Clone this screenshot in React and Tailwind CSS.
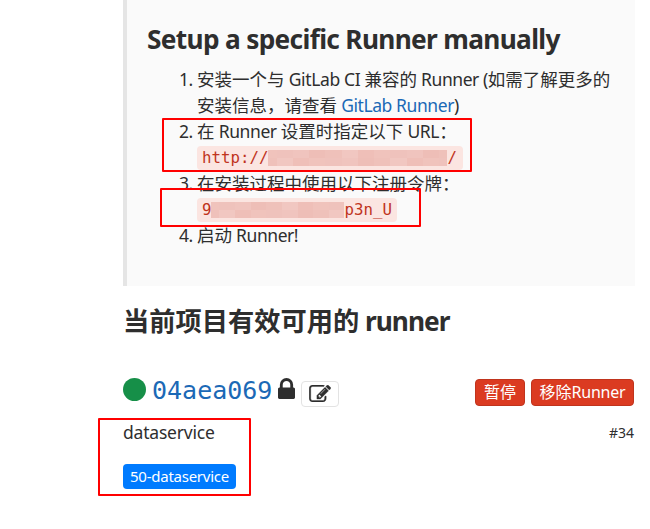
import React from "react";

const MOSAIC = ["#f0c3bc", "#efbfb8", "#f1c7c1", "#efc1ba", "#eebeb7", "#f0c4be", "#efc2bc"];

function Redacted({ columns, className }) {
  return (
    <span className={`inline-grid shrink-0 grid-flow-col grid-rows-2 auto-cols-fr align-top ${className}`} aria-hidden="true">
      {Array.from({ length: columns * 2 }, (_, i) => (
        <span key={i} style={{ backgroundColor: MOSAIC[(i * 3 + (i >> 2)) % MOSAIC.length] }} />
      ))}
    </span>
  );
}

function Code({ children, className }) {
  return (
    <code className={`flex h-6 items-center overflow-hidden rounded-[4px] bg-[#fbe5e1] pl-[5px] font-['DejaVu_Sans_Mono',monospace] text-[15.75px] leading-6 text-[#c0341d] ${className}`}>
      {children}
    </code>
  );
}

function Item({ number, children }) {
  return (
    <li className="flex">
      <span className="w-[18px] shrink-0 tracking-[-0.6px]">{number}.</span>
      <div className="whitespace-nowrap">{children}</div>
    </li>
  );
}

export default function App() {
  return (
    <div className="relative h-[529px] w-[650px] overflow-hidden bg-white font-['Noto_Sans','Noto_Sans_CJK_SC',sans-serif] text-[17.5px] leading-[26px] text-[#2e2e2e]">
      <section className="ml-[123px] h-[286px] w-[512px] border-l-4 border-[#e5e5e5] bg-[#fafafa] pl-5 pt-[23px]">
        <h4 className="h-[43px] whitespace-nowrap text-[26.25px] font-bold leading-8 tracking-[-0.67px]">
          Setup a specific Runner manually
        </h4>
        <ol className="pl-8">
          <Item number={1}>
            安装一个与<span className="tracking-[-0.36px]"> GitLab CI </span>兼容的<span className="tracking-[-0.45px]"> Runner (</span>如需了解更多的
            <br />
            安装信息，请查看<span className="tracking-[-0.42px]"> <a className="text-[#1b69b6]">GitLab Runner</a>)</span>
          </Item>
          <Item number={2}>
            在<span className="tracking-[-0.4px]"> Runner </span>设置时指定以下<span className="tracking-[-0.4px]"> URL</span>：
            <div className="flex h-[26px] items-end">
              <Code className="w-[266px]">
                http://
                <Redacted columns={22} className="h-4 w-[179px]" />/
              </Code>
            </div>
          </Item>
          <Item number={3}>
            在安装过程中使用以下注册令牌：
            <div className="flex h-[26px] items-end">
              <Code className="w-[200px]">
                9<Redacted columns={17} className="h-4 w-[133px]" />p3n_U
              </Code>
            </div>
          </Item>
          <Item number={4}>
            启动<span className="tracking-[-0.45px]"> Runner!</span>
          </Item>
        </ol>
      </section>

      <h4 className="ml-[123px] mt-[19px] h-8 whitespace-nowrap text-[26.25px] font-bold leading-8">
        当前项目有效可用的<span className="tracking-[-1px]"> runner</span>
      </h4>

      <div className="ml-[123px] mt-[39px] flex h-[34px] w-[511px] items-start">
        <span className="mt-[2px] h-[23px] w-[23px] rounded-full bg-[#168f48]" />
        <a className="ml-[6px] font-['DejaVu_Sans_Mono',monospace] text-[25px] leading-[30px] text-[#1b69b6]">04aea069</a>
        <svg className="ml-[6px] mt-[2px] h-[21px] w-[17px]" viewBox="320 128 1152 1408" fill="currentColor">
          <path d="M640 768h512v-192q0-106-75-181t-181-75-181 75-75 181v192zm832 96v576q0 40-28 68t-68 28h-960q-40 0-68-28t-28-68v-576q0-40 28-68t68-28h32v-192q0-184 132-316t316-132 316 132 132 316v192h32q40 0 68 28t28 68z" />
        </svg>
        <button className="ml-[6px] mt-[5px] flex h-[26px] w-[38px] items-center justify-center rounded-[4px] border border-[#e3e3e3] bg-white pb-[2px]">
          <svg className="h-[17px] w-[22px]" viewBox="0 128 1792 1408" fill="currentColor" stroke="currentColor" strokeWidth="30">
            <path d="M888 1184l116-116-152-152-116 116v56h96v96h56zm440-720q-16-16-33 1l-350 350q-17 17-1 33t33-1l350-350q17-17 1-33zm80 594v190q0 119-84.5 203.5t-203.5 84.5h-832q-119 0-203.5-84.5t-84.5-203.5v-832q0-119 84.5-203.5t203.5-84.5h832q63 0 117 25 15 7 18 23 3 17-9 29l-49 49q-14 14-32 8-23-6-45-6h-832q-66 0-113 47t-47 113v832q0 66 47 113t113 47h832q66 0 113-47t47-113v-126q0-13 9-22l64-64q15-15 35-7t20 29zm-96-738l288 288-672 672h-288v-288zm444 132l-92 92-288-288 92-92q28-28 68-28t68 28l152 152q28 28 28 68t-28 68z" />
          </svg>
        </button>
        <div className="ml-auto mt-[3px] flex gap-[6px] text-[16px] leading-[25px] text-white">
          <button className="h-[27px] w-[50px] rounded-[4px] border border-[#c0341d] bg-[#db3b21]">暂停</button>
          <button className="h-[27px] w-[103px] whitespace-nowrap rounded-[4px] border border-[#c0341d] bg-[#db3b21]">
            移除<span className="tracking-[-0.2px]">Runner</span>
          </button>
        </div>
      </div>

      <div className="ml-[123px] mt-[9px] flex h-[26px] w-[511px] items-center justify-between">
        <span className="tracking-[-0.2px]">dataservice</span>
        <small className="pt-[2px] text-[14px]">#34</small>
      </div>
      <span className="ml-[123px] mt-[19px] flex h-[25px] w-[113px] items-center justify-center rounded-[4px] bg-[#007bff] pb-[2px] text-[15px] tracking-[-0.25px] text-white">
        50-dataservice
      </span>

      <div className="absolute left-[162px] top-[118px] h-[54px] w-[310px] rounded-[1px] border-2 border-[#ff0000]" />
      <div className="absolute left-[160px] top-[188px] h-[39px] w-[261px] rounded-[1px] border-2 border-[#ff0000]" />
      <div className="absolute left-[98px] top-[418px] h-[78px] w-[153px] rounded-[1px] border-2 border-[#ff0000]" />
    </div>
  );
}
